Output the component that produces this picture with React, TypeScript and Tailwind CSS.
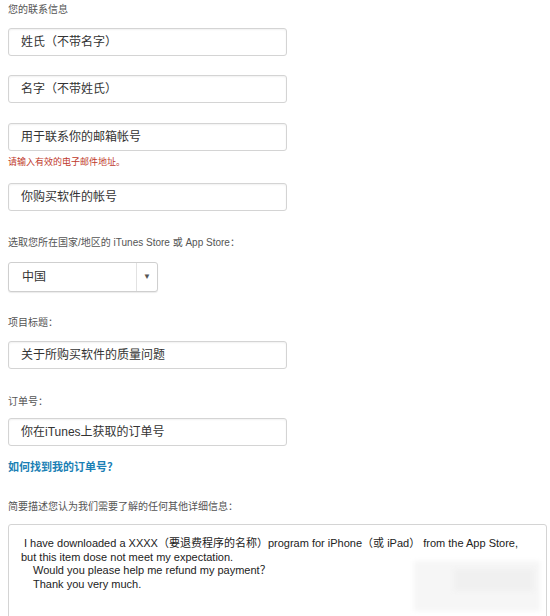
const label = "text-[10px] leading-[14px] text-[#555]";
const field =
  "h-[28px] w-[279px] rounded-[3px] border border-[#d4d4d4] bg-white pl-[12px] flex items-center text-[12px] text-[#333] shadow-[inset_0_1px_2px_rgba(0,0,0,0.06)]";

function Field({ children, className = "" }: { children: React.ReactNode; className?: string }) {
  return <div className={`${field} ${className}`}>{children}</div>;
}

export default function App() {
  return (
    <div
      className="w-[550px] h-[616px] overflow-hidden bg-white px-[8px] pt-[3px]"
      style={{ fontFamily: '"Liberation Sans", "Noto Sans CJK SC", sans-serif' }}
    >
      <p className={label}>您的联系信息</p>
      <Field className="mt-[11px]">姓氏（不带名字）</Field>
      <Field className="mt-[19px]">名字（不带姓氏）</Field>
      <Field className="mt-[20px]">用于联系你的邮箱帐号</Field>
      <p className="mt-[5px] text-[9px] leading-[12px] text-[#c0392b]">请输入有效的电子邮件地址。</p>
      <Field className="mt-[15px]">你购买软件的帐号</Field>

      <p className={`mt-[25px] ${label}`}>选取您所在国家/地区的 iTunes Store 或 App Store：</p>
      <div className="mt-[12px] flex h-[30px] w-[150px] rounded-[3px] border border-[#cfcfcf] bg-white shadow-[0_1px_1px_rgba(0,0,0,0.08)]">
        <div className="flex flex-1 items-center pl-[13px] text-[12px] text-[#333]">中国</div>
        <div className="flex w-[21px] items-center justify-center border-l border-[#e2e2e2]">
          <span className="text-[8px] text-[#555]">▼</span>
        </div>
      </div>

      <p className={`mt-[24px] ${label}`}>项目标题：</p>
      <Field className="mt-[11px]">关于所购买软件的质量问题</Field>

      <p className={`mt-[26px] ${label}`}>订单号：</p>
      <Field className="mt-[9px]">你在iTunes上获取的订单号</Field>

      <p className="mt-[13px] text-[11px] leading-[16px] font-bold text-[#1a7fb5]">如何找到我的订单号？</p>

      <p className={`mt-[25px] ${label}`}>简要描述您认为我们需要了解的任何其他详细信息：</p>
      <div className="relative mt-[10px] h-[120px] w-[539px] rounded-[3px] border border-[#d4d4d4] bg-white pl-[12px] pt-[12px] text-[11px] leading-[13.5px] text-[#222] whitespace-nowrap">
        <div className="pl-[3px]">I have downloaded a XXXX（要退费程序的名称）program for iPhone（或 iPad） from the App Store,</div>
        <div>but this item dose not meet my expectation.</div>
        <div className="pl-[12px]">Would you please help me refund my payment？</div>
        <div className="pl-[12px]">Thank you very much.</div>
        {/* faded watermark patch */}
        <div className="absolute left-[405px] top-[36px] h-[50px] w-[126px] bg-[#f6f6f6] blur-[2px]" />
        <div className="absolute left-[445px] top-[44px] h-[22px] w-[80px] bg-[#f0f0f0] blur-[2px]" />
      </div>
    </div>
  );
}
